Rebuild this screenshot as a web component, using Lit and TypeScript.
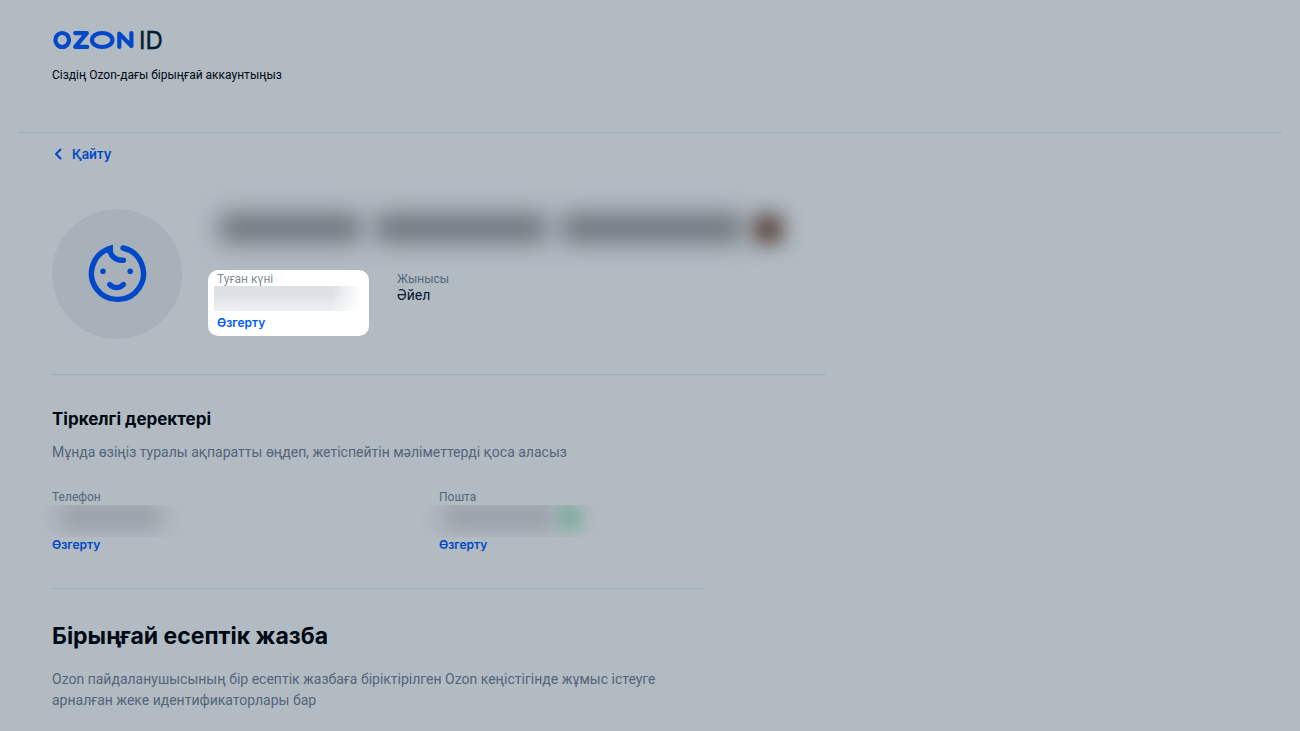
import { LitElement, html, css } from "lit";
import { customElement, property } from "lit/decorators.js";

@customElement("profile-field")
class ProfileField extends LitElement {
  @property() label = "";
  @property() value = "";
  @property({ type: Boolean }) editable = false;
  @property({ type: Boolean, reflect: true }) highlighted = false;

  static styles = css`
    :host {
      display: block;
      box-sizing: border-box;
      color: #55677a;
    }
    :host([highlighted]) {
      background: #fff;
      border-radius: 10px;
      color: #808d9a;
    }
    .label {
      font-size: 12px;
      line-height: 16px;
    }
    .value {
      font-size: 14px;
      line-height: 16px;
      color: #04162f;
    }
    .edit {
      display: block;
      padding: 0;
      border: 0;
      background: none;
      font: 600 12px/16px Inter, "Noto Sans", sans-serif;
      color: #0048c8;
      cursor: pointer;
    }
    :host([highlighted]) .edit {
      color: #005bff;
    }
  `;

  render() {
    return html`
      <div class="label">${this.label}</div>
      ${this.value ? html`<div class="value">${this.value}</div>` : ""}
      <slot></slot>
      ${this.editable ? html`<button class="edit" type="button">Өзгерту</button>` : ""}
    `;
  }
}

@customElement("app-root")
class AppRoot extends LitElement {
  static styles = css`
    :host {
      display: block;
      min-height: 100vh;
      box-sizing: border-box;
      padding: 0 18px;
      background: #b2bac2;
      color: #000a14;
      font-family: Roboto, "Noto Sans", sans-serif;
      overflow: hidden;
    }
    .header {
      box-sizing: border-box;
      height: 133px;
      padding: 28px 34px 0;
      border-bottom: 1px solid #9dadbe;
    }
    .logo {
      display: block;
      overflow: visible;
    }
    .logo text {
      font: 400 24px Inter, sans-serif;
      fill: #001a34;
      stroke: #001a34;
      stroke-width: 0.4;
    }
    .tagline {
      margin: 15px 0 0;
      font-size: 12px;
      line-height: 16px;
    }
    .content {
      padding: 12px 34px 0;
    }
    .back {
      display: flex;
      align-items: center;
      gap: 8px;
      width: max-content;
      color: #0048c8;
      font: 600 13px/18px Inter, "Noto Sans", sans-serif;
      text-decoration: none;
    }
    .profile {
      display: flex;
      gap: 26px;
      max-width: 774px;
      box-sizing: border-box;
      margin-top: 27px;
      padding-bottom: 35px;
      border-bottom: 1px solid #9dadbe;
    }
    .avatar {
      display: grid;
      place-items: center;
      flex: none;
      width: 130px;
      height: 130px;
      margin-top: 19px;
      border-radius: 50%;
      background: #a8b0b9;
    }
    .details {
      flex: 1;
      min-width: 0;
    }
    .name {
      display: flex;
      gap: 14px;
      height: 72px;
      margin: 0 0 8px;
      padding: 24px 0 0 11px;
      box-sizing: border-box;
    }
    .word {
      height: 28px;
      border-radius: 6px;
      background: #6a7179;
      filter: blur(12px);
    }
    .word.last { width: 142px; }
    .word.first { width: 172px; }
    .word.middle { width: 182px; }
    .word.emoji {
      width: 30px;
      height: 30px;
      margin-left: -4px;
      border-radius: 8px;
      background: #5a4640;
      filter: blur(10px);
    }
    .facts {
      display: flex;
      align-items: flex-start;
      gap: 28px;
    }
    .birth {
      width: 161px;
      height: 66px;
      padding: 1px 9px 0;
    }
    .gender {
      padding-top: 1px;
    }
    .mask {
      overflow: hidden;
    }
    .mask.date {
      height: 25px;
      margin: -1px -1px 4px -3px;
      background: linear-gradient(90deg, #dde1e4 0, #dde1e4 80%, #fff 100%);
    }
    .mask.date::after {
      content: "";
      display: block;
      height: 100%;
      background: linear-gradient(180deg, transparent 30%, #ffffff80 100%);
    }
    .mask.contact {
      display: flex;
      height: 32px;
      margin: 0 0 0 -20px;
      padding-left: 28px;
    }
    .blob {
      width: 100px;
      height: 24px;
      background: #959ba3;
      filter: blur(11px);
    }
    .blob.mail {
      width: 112px;
      margin-left: -4px;
    }
    .blob.check {
      width: 22px;
      margin-left: 4px;
      background: #78ac98;
      filter: blur(8px);
    }
    .account {
      max-width: 774px;
    }
    h2 {
      margin: 34px 0 0;
      font: 700 17px/20px Inter, "Noto Sans", sans-serif;
    }
    .hint {
      margin: 13px 0 0;
      font-size: 14px;
      line-height: 20px;
      color: #52657a;
    }
    .contacts {
      display: grid;
      grid-template-columns: 1fr 1fr;
      margin-top: 27px;
    }
    .unified {
      max-width: 653px;
      margin-top: 35px;
      border-top: 1px solid #9dadbe;
    }
    h1 {
      margin: 32px 0 0;
      font: 700 23px/30px Inter, "Noto Sans", sans-serif;
    }
    .about {
      margin: 18px 0 0;
      max-width: 630px;
      font-size: 14px;
      line-height: 21px;
      color: #52657a;
    }
  `;

  render() {
    return html`
      <header class="header">
        <svg class="logo" width="114" height="24" viewBox="0 0 114 24" role="img" aria-label="Ozon ID">
          <g fill="none" stroke="#0048c8" stroke-width="4.2" stroke-linecap="round" stroke-linejoin="round">
            <ellipse cx="10.2" cy="12" rx="6.8" ry="7" />
            <polyline points="23.2,5.1 34.8,5.1 23.2,18.9 35.2,18.9" />
            <ellipse cx="50.2" cy="12" rx="10.2" ry="7" />
            <polyline points="67.3,18.9 67.3,5.6 79.4,18 79.4,5.1" />
          </g>
          <text x="87" y="20.6">ID</text>
        </svg>
        <p class="tagline">Сіздің Ozon-дағы бірыңғай аккаунтыңыз</p>
      </header>
      <main class="content">
        <a class="back" href="#">
          <svg width="12" height="12" viewBox="0 0 12 12" aria-hidden="true">
            <path d="M8.5 1.5 L4 6 L8.5 10.5" fill="none" stroke="#0048c8" stroke-width="2" stroke-linecap="round" stroke-linejoin="round" />
          </svg>
          Қайту
        </a>
        <section class="profile">
          <div class="avatar">
            <svg width="60" height="60" viewBox="0 0 60 60" aria-hidden="true">
              <g fill="none" stroke="#0048c8" stroke-width="5.4" stroke-linecap="round">
                <path d="M36 4 A26 26 0 1 1 23 4.5 C22.6 11.5 28.5 17 36.5 16.2" />
                <path d="M22.8 40.5 C26.5 44.7 32.5 44.7 36.4 40.5" />
              </g>
              <path d="M18.5 3.2 L25.9 0.8 L25.8 6 L21.5 7 Z" fill="#0048c8" />
              <circle cx="16" cy="27.3" r="2.8" fill="#0048c8" />
              <circle cx="43.2" cy="27.3" r="2.8" fill="#0048c8" />
            </svg>
          </div>
          <div class="details">
            <div class="name" aria-hidden="true">
              <span class="word last"></span>
              <span class="word first"></span>
              <span class="word middle"></span>
              <span class="word emoji"></span>
            </div>
            <div class="facts">
              <profile-field class="birth" label="Туған күні" highlighted editable>
                <div class="mask date"></div>
              </profile-field>
              <profile-field class="gender" label="Жынысы" value="Әйел"></profile-field>
            </div>
          </div>
        </section>
        <section class="account">
          <h2>Тіркелгі деректері</h2>
          <p class="hint">Мұнда өзіңіз туралы ақпаратты өңдеп, жетіспейтін мәліметтерді қоса аласыз</p>
          <div class="contacts">
            <profile-field label="Телефон" editable>
              <div class="mask contact"><span class="blob"></span></div>
            </profile-field>
            <profile-field label="Пошта" editable>
              <div class="mask contact"><span class="blob mail"></span><span class="blob check"></span></div>
            </profile-field>
          </div>
        </section>
        <section class="unified">
          <h1>Бірыңғай есептік жазба</h1>
          <p class="about">
            Ozon пайдаланушысының бір есептік жазбаға біріктірілген Ozon кеңістігінде жұмыс істеуге
            арналған жеке идентификаторлары бар
          </p>
        </section>
      </main>
    `;
  }
}
